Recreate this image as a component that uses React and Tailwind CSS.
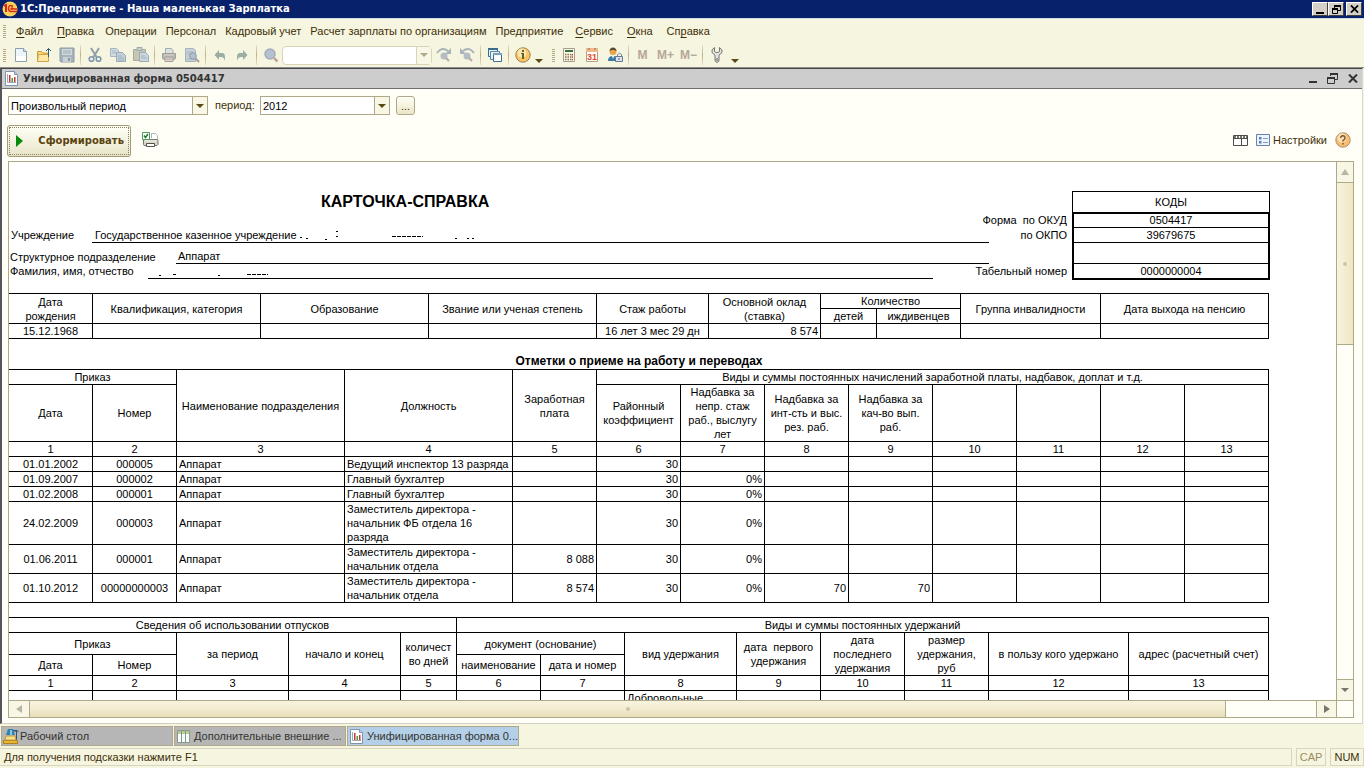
import React, { useState } from 'react';

const MENU = [
  ['', 'Ф', 'айл'],
  ['', 'П', 'равка'],
  ['Операции'],
  ['Персонал'],
  ['Кадровый учет'],
  ['Расчет зарплаты по организациям'],
  ['Предприятие'],
  ['', 'С', 'ервис'],
  ['', 'О', 'кна'],
  ['Сп', 'р', 'авка'],
];

const ORDERS = [
  ['01.01.2002', '000005', 'Аппарат', 'Ведущий инспектор 13 разряда', '', '30', '', '', ''],
  ['01.09.2007', '000002', 'Аппарат', 'Главный бухгалтер', '', '30', '0%', '', ''],
  ['01.02.2008', '000001', 'Аппарат', 'Главный бухгалтер', '', '30', '0%', '', ''],
  ['24.02.2009', '000003', 'Аппарат', 'Заместитель директора -\nначальник ФБ отдела 16\nразряда', '', '30', '0%', '', ''],
  ['01.06.2011', '000001', 'Аппарат', 'Заместитель директора -\nначальник отдела', '8 088', '30', '0%', '', ''],
  ['01.10.2012', '00000000003', 'Аппарат', 'Заместитель директора -\nначальник отдела', '8 574', '30', '0%', '70', '70'],
];

const Icon = ({ children, w = 16, h = 16 }) => (
  <svg width={w} height={h} viewBox={`0 0 ${w} ${h}`} fill="none" className="shrink-0" aria-hidden="true">
    {children}
  </svg>
);

const NewIcon = () => (
  <Icon>
    <path d="M2.5 1.5h8l3 3v10h-11z" fill="#fff" stroke="#8ba0ae" />
    <path d="M3 2h7v3h3v4H3z" fill="#eef5fa" />
    <path d="M10.5 1.5v3h3" fill="#cfdde6" stroke="#8ba0ae" />
  </Icon>
);

const OpenIcon = () => (
  <Icon>
    <path d="M1.5 14.5v-10h4l1 1.500h5v8.500z" fill="#fbd877" stroke="#c99a3c" />
    <path d="M1.500 14.500l1-7h10v7z" fill="#fde9a3" stroke="#d0a548" />
    <path d="M12.500 10V1.500M10 4l2.500-2.500L15 4" stroke="#2f5f78" />
  </Icon>
);

const SaveIcon = () => (
  <Icon>
    <path d="M1 1h14v14H2l-1-1z" fill="#a3b2bd" stroke="#8c9ca8" />
    <path d="M3 2h10v6H3z" fill="#d3dadd" />
    <path d="M4 4h8M4 6h8" stroke="#9eabb4" />
    <path d="M4 10h8v5H4z" fill="#c8d0d4" />
    <path d="M9 11h2v3H9z" fill="#8797a3" />
  </Icon>
);

const CutIcon = () => (
  <Icon>
    <path d="M4 1l5.500 9M12 1L6.500 10" stroke="#8fa0aa" strokeWidth="2" />
    <circle cx="4.500" cy="12" r="2.300" stroke="#7e97ad" strokeWidth="1.600" />
    <circle cx="11.500" cy="12" r="2.300" stroke="#7e97ad" strokeWidth="1.600" />
  </Icon>
);

const CopyIcon = () => (
  <Icon>
    <path d="M.5 1.500h6l2 2v6h-8z" fill="#d0dbe1" stroke="#a6b7c2" />
    <path d="M2 4h4M2 6h4" stroke="#a6b7c2" />
    <path d="M6.500 5.500h6l3 3v6h-9z" fill="#c4d1da" stroke="#97abba" />
    <path d="M8 9h4M8 11h6M8 13h6" stroke="#a0b3c0" />
  </Icon>
);

const PasteIcon = () => (
  <Icon>
    <path d="M.5 2.500h12v11H.5z" fill="#c7c6b2" stroke="#abab9d" />
    <path d="M4 .5h5v3H4z" fill="#c5ccce" stroke="#9da9ad" />
    <path d="M6.500 5.500h6l3 3v6h-9z" fill="#cbd6dd" stroke="#99acba" />
    <path d="M8 9h4M8 11h6" stroke="#a0b3c0" />
  </Icon>
);

const PrintIcon = () => (
  <Icon>
    <path d="M4.500 6V1.500h6l1.500 2V6" fill="#dce2e4" stroke="#a5adaf" />
    <path d="M1.500 6.500h13v5l-1 1h-11l-1-1z" fill="#b9b9b3" stroke="#a0a09c" />
    <path d="M3 8h10" stroke="#d4d4cc" />
    <path d="M4 10h8v4.500H4z" fill="#d8d3cb" stroke="#a8a29e" />
    <path d="M5 12h6" stroke="#c7a9a0" />
  </Icon>
);

const PreviewIcon = () => (
  <Icon>
    <path d="M1.500 1.500h8l2 2v11h-10z" fill="#c6d0d6" stroke="#a5b3bc" />
    <path d="M3 5h6M3 7h4M3 12h6" stroke="#a5b5be" />
    <circle cx="9" cy="9" r="3.300" fill="#b1bfd0" stroke="#8c9cac" />
    <path d="M11.500 11.500L15 15" stroke="#b09a96" strokeWidth="2" />
  </Icon>
);

const UndoIcon = () => (
  <Icon>
    <path d="M7 3v3h3q3 0 3 4v4q-1-4-4-4H7v3L2.500 8z" fill="#9caea4" />
  </Icon>
);

const RedoIcon = () => (
  <Icon>
    <path d="M8 3v3H5q-3 0-3 4v4q1-4 4-4h2v3l4.500-5z" fill="#9caea4" />
  </Icon>
);

const SearchIcon = () => (
  <Icon>
    <path d="M11 11l3.500 3.500" stroke="#c3a39c" strokeWidth="2.500" />
    <circle cx="7" cy="7" r="5" fill="#b4c2d0" stroke="#a3adba" strokeWidth="1.500" />
  </Icon>
);

const FindNextIcon = ({ back }) => (
  <Icon>
    {back ? (
      <path d="M15 6Q10-1 4 4" stroke="#a7b5b8" strokeWidth="2" />
    ) : (
      <path d="M1 6Q6-1 12 4" stroke="#a7b5b8" strokeWidth="2" />
    )}
    <path d={back ? 'M1 1v6h6z' : 'M15 1v6H9z'} fill="#a7b5b8" />
    <circle cx="8" cy="9" r="3.500" fill="#b6bcc4" />
    <path d="M10 11l3 3" stroke="#b9a8a6" strokeWidth="2" />
  </Icon>
);

const WindowsIcon = () => (
  <Icon>
    <path d="M1.500 1.500h9v8h-9z" fill="#e6f0f5" stroke="#3c6c8c" />
    <path d="M1 2h10" stroke="#3c6c8c" strokeWidth="2" />
    <path d="M3.500 4.500h9v8h-9z" fill="#e6f0f5" stroke="#5787a3" />
    <path d="M6.500 7h8v7.500h-8z" fill="#fff" stroke="#3c6c8c" />
    <path d="M6 7h9" stroke="#77a4bc" strokeWidth="2" />
  </Icon>
);

const InfoIcon = () => (
  <Icon>
    <circle cx="8" cy="8" r="7.200" fill="#fbc566" stroke="#99824f" />
    <circle cx="7" cy="6" r="4.500" fill="#ffe6ae" />
    <path d="M7 3h2v2H7zM6 6h3v6H7V7H6z" fill="#526b2c" />
  </Icon>
);

const CalcIcon = () => (
  <Icon>
    <path d="M2.500 1.500h11v13h-11z" fill="#fdf8e3" stroke="#a39f90" />
    <path d="M4 3h8v2H4z" fill="#35703b" />
    <path d="M4 7.500h6M4 10h6M4 12.500h6" stroke="#7d7358" strokeWidth="1.500" strokeDasharray="1.500 1" />
    <path d="M10.500 7h1.500v1.500h-1.500zM10.500 9.300h1.500v1.500h-1.500zM10.500 11.700h1.500v1.500h-1.500z" fill="#c64a32" />
  </Icon>
);

const CalendarIcon = () => (
  <Icon>
    <path d="M2.500 1.500h11v13h-11z" fill="#fff" stroke="#b4a18a" />
    <path d="M2 1h12v4H2z" fill="#f0b98c" />
    <path d="M5 1v2M11 1v2" stroke="#8c6a4c" />
    <text x="8" y="13" textAnchor="middle" fontSize="9" fontFamily="Liberation Sans, sans-serif" fontWeight="700" fill="#e14a22">31</text>
  </Icon>
);

const UserIcon = () => (
  <Icon>
    <circle cx="6" cy="4.500" r="3.500" fill="#e8a54b" />
    <path d="M2.500 4Q3 .5 6 .5T9.500 4Q6 2 2.500 4z" fill="#5b4a2e" />
    <path d="M1 14q0-5 5-5t5 5z" fill="#3a78a8" />
    <path d="M5 9h2l-1 3z" fill="#fff" />
    <path d="M10.500 9V7.500q2-2.500 4 0V9" stroke="#76869a" />
    <path d="M8.500 9.500h7v5h-7z" fill="#dde6f0" stroke="#66788f" />
    <path d="M12 11v2" stroke="#4a5a70" />
  </Icon>
);

const WrenchIcon = () => (
  <Icon>
    <path d="M5.500.5v4l1.500 1h2l1.500-1v-4q3.500 2 2.500 5L10 8v4q.5 3-2 3.500-2.500-.5-2-3.500V8L3 5.500q-1-3 2.500-5z" fill="#e4e4e0" stroke="#77776f" />
    <circle cx="8" cy="12.500" r="1" fill="#fff" stroke="#77776f" />
  </Icon>
);

const ReportIcon = () => (
  <Icon w={13} h={15}>
    <path d="M.5.5h9l3 3v11H.5z" fill="#fff" stroke="#7e93ad" />
    <path d="M9.500.5v3h3" fill="#c7d5e6" stroke="#7e93ad" />
    <path d="M2.500 3v8.500H11" stroke="#9ca8b5" />
    <path d="M4 4h1.500v7H4z" fill="#c03a32" />
    <path d="M6.500 7H8v4H6.500z" fill="#4d9a4a" />
    <path d="M9 6h1.500v5H9z" fill="#c03a32" />
  </Icon>
);

const PrinterCheckIcon = () => (
  <Icon w={17} h={16}>
    <path d="M9.500 6V1.500h4l2 2V7" fill="#fff" stroke="#aeb4b8" />
    <path d="M1.500 7.500h14l.5 1v4l-1 1H2l-.5-1z" fill="#d8d6cc" stroke="#77756c" />
    <path d="M3 9h11" stroke="#f4f3ec" />
    <path d="M4.500 11.500h8v3h-8z" fill="#fff" stroke="#55534b" />
    <path d="M.5.5h7v7h-7z" fill="#fff" stroke="#4f9a5e" />
    <path d="M2 3.500l1.500 2L6 2" stroke="#1d7a2d" strokeWidth="1.500" />
  </Icon>
);

const LogoIcon = () => (
  <Icon>
    <circle cx="8" cy="8" r="7.500" fill="#f9d25c" />
    <path d="M2 5l2-1v7" stroke="#d8281c" strokeWidth="2" />
    <path d="M11 5.500Q7 3 6.500 7t4.500 3.500h4.500M11 7.500Q9 6.500 9 8h6" stroke="#d8281c" strokeWidth="1.500" />
  </Icon>
);

const DeskIcon = () => (
  <Icon>
    <path d="M.5 12.500h14v3H.5z" fill="#e8b62e" stroke="#ad7f1a" />
    <path d="M2 12l1-4h9l1 4z" fill="#f9e08a" stroke="#c29a3c" />
    <path d="M5 1h5l2 6H3z" fill="#2d83b0" />
    <path d="M7 2h2v5H7z" fill="#8cc7df" />
    <path d="M10 2.500h3.500v9M11.500 4l2-2 2 2" stroke="#2a5572" />
  </Icon>
);

const ColumnsIcon = () => (
  <Icon w={13} h={13}>
    <path d="M.5.500h12v12H.5z" fill="#fbfdf8" stroke="#8a9b8e" />
    <path d="M1 1h11v3H1z" fill="#bccc8a" />
    <path d="M4.500 1v11M8.500 1v11" stroke="#7d94a0" />
  </Icon>
);

const GridIcon = () => (
  <Icon w={15} h={11}>
    <path d="M.5.500h14v10H.5z" fill="#fff" stroke="#4d4d48" />
    <path d="M1 2h13" stroke="#77776f" strokeWidth="2" strokeDasharray="2 1" />
    <path d="M1 3.500h13M8.500 4v6" stroke="#4d4d48" />
  </Icon>
);

const SettingsIcon = () => (
  <Icon w={14} h={12}>
    <path d="M.5.500h13v11H.5z" fill="#eef4fd" stroke="#6880b4" />
    <path d="M3 3h2.500v2.500H3zM3 7h2.500v2.500H3z" fill="#5d7bb8" />
    <path d="M7 4.500h5M7 8.500h5" stroke="#8a9cc4" />
  </Icon>
);

const HelpIcon = () => (
  <Icon>
    <circle cx="8" cy="8" r="7.200" fill="#f8bd70" stroke="#ac8f6c" />
    <circle cx="7" cy="6" r="4.500" fill="#fee2b5" />
    <path d="M5.500 6Q6 3.500 8 3.700t2 2.300Q10 7.500 8 8.500v1M8 11v1.500" stroke="#7d5b37" strokeWidth="1.500" />
  </Icon>
);

const Triangle = ({ dir = 'down', color = '#5c4a13', size = 8 }) => {
  const d = {
    down: 'M0 2h8L4 6z',
    up: 'M0 7h8L4 1z',
    left: 'M7 0v8L1 4z',
    right: 'M1 0v8l6-4z',
  }[dir];
  return (
    <svg width={size} height={size} viewBox="0 0 8 8" aria-hidden="true">
      <path d={d} fill={color} />
    </svg>
  );
};

const Separator = () => <span className="mx-0.5 h-5 w-px shrink-0 bg-gradient-to-b from-[#e8dfc4] via-[#bfb08c] to-[#e8dfc4]" />;

const Grip = () => (
  <span className="flex w-[3px] shrink-0 flex-col gap-px">
    {[0, 1, 2, 3, 4, 5, 6].map((i) => (
      <span key={i} className="h-px bg-[#b5aa86]" />
    ))}
  </span>
);

const Tool = ({ title, children }) => (
  <button type="button" title={title} className="flex h-[22px] w-[23px] shrink-0 items-center justify-center">
    {children}
  </button>
);

const Combo = ({ id, label, value, options, onChange, width }) => (
  <div className={`relative flex h-[19px] border border-[#b0a989] bg-white ${width}`}>
    <select
      id={id}
      aria-label={label}
      value={value}
      onChange={(e) => onChange(e.target.value)}
      className="w-full appearance-none bg-transparent pl-0.5 pr-4 leading-4 text-black outline-none"
    >
      {options.map((o) => (
        <option key={o}>{o}</option>
      ))}
    </select>
    <span className="pointer-events-none absolute inset-y-0 right-0 flex w-[15px] items-center justify-center border-l border-[#b0a989] bg-[#f8f6e4]">
      <Triangle />
    </span>
  </div>
);

const RestoreGlyph = () => (
  <Icon w={11} h={11}>
    <path d="M3.500 3V.5h7v6H8" stroke="currentColor" />
    <path d="M3 1h8M0 5h8" stroke="currentColor" strokeWidth="2" />
    <path d="M.5 4.500h7v6h-7z" stroke="currentColor" />
  </Icon>
);

const SmallRestoreGlyph = () => (
  <Icon w={9} h={9}>
    <path d="M2.500 3V.5h6v5H6" stroke="currentColor" />
    <path d="M2 1h7M0 4h6" stroke="currentColor" strokeWidth="2" />
    <path d="M.5 3.500h5v5h-5z" stroke="currentColor" />
  </Icon>
);

const CloseGlyph = ({ w = 10 }) => (
  <svg width={w} height={w - 1} viewBox="0 0 10 9" fill="none" aria-hidden="true">
    <path d="M1 .5l8 8M9 .5l-8 8" stroke="currentColor" strokeWidth="2" />
  </svg>
);

const MinGlyph = () => (
  <Icon w={8} h={9}>
    <path d="M0 8h8" stroke="currentColor" strokeWidth="2" />
  </Icon>
);

const winButton =
  'flex h-[14px] w-4 items-center justify-center border border-t-white border-l-white border-r-[#404040] border-b-[#404040] bg-[#d4d0c8] text-black';

const TitleBar = () => (
  <header className="flex h-[18px] shrink-0 items-center bg-[#08216b] pl-0.5 pr-0.5 text-white">
    <LogoIcon />
    <h1 className="ml-0.5 grow font-['DejaVu_Sans',sans-serif] text-[10px] font-bold">1С:Предприятие - Наша маленькая Зарплатка</h1>
    <button type="button" aria-label="Свернуть" className={winButton}><MinGlyph /></button>
    <button type="button" aria-label="Восстановить" className={winButton}><SmallRestoreGlyph /></button>
    <button type="button" aria-label="Закрыть" className={`ml-0.5 ${winButton}`}><CloseGlyph w={9} /></button>
  </header>
);

const MenuBar = () => (
  <nav className="flex h-[25px] shrink-0 items-center border-t border-[#d5dbe6] pl-[3px]">
    <Grip />
    <ul className="ml-[3px] flex">
      {MENU.map(([before, key, after]) => (
        <li key={before + key}>
          <button type="button" className={key ? 'px-[7px]' : 'pl-1 pr-[5px]'}>
            {before}
            {key && <span className="underline underline-offset-2">{key}</span>}
            {after}
          </button>
        </li>
      ))}
    </ul>
  </nav>
);

const Toolbar = () => (
  <div className="flex h-[25px] shrink-0 items-center border-b border-[#8e8e88] pl-[3px]">
    <Grip />
    <span className="w-[3px]" />
    <Tool title="Новый"><NewIcon /></Tool>
    <Tool title="Открыть"><OpenIcon /></Tool>
    <Tool title="Сохранить"><SaveIcon /></Tool>
    <Separator />
    <Tool title="Вырезать"><CutIcon /></Tool>
    <Tool title="Копировать"><CopyIcon /></Tool>
    <Tool title="Вставить"><PasteIcon /></Tool>
    <Separator />
    <Tool title="Печать"><PrintIcon /></Tool>
    <Tool title="Предварительный просмотр"><PreviewIcon /></Tool>
    <Separator />
    <Tool title="Отменить"><UndoIcon /></Tool>
    <Tool title="Вернуть"><RedoIcon /></Tool>
    <Separator />
    <Tool title="Найти"><SearchIcon /></Tool>
    <div className="flex h-[19px] w-[150px] rounded-sm border border-[#d9d3b8] bg-white">
      <input type="text" aria-label="Поиск" className="w-0 grow bg-transparent px-0.5 outline-none" />
      <button type="button" aria-label="История поиска" className="flex w-[15px] items-center justify-center border-l border-[#d9d3b8] bg-[#f8f7e6]">
        <Triangle color="#b0a98a" />
      </button>
    </div>
    <Tool title="Найти далее"><FindNextIcon /></Tool>
    <Tool title="Найти предыдущее"><FindNextIcon back /></Tool>
    <Separator />
    <Tool title="Окна"><WindowsIcon /></Tool>
    <Separator />
    <Tool title="Справка"><InfoIcon /></Tool>
    <button type="button" aria-label="Еще" className="flex h-5 w-[10px] items-end justify-center"><Triangle /></button>
    <span className="ml-2 mr-0.5"><Grip /></span>
    <Tool title="Калькулятор"><CalcIcon /></Tool>
    <Tool title="Календарь"><CalendarIcon /></Tool>
    <Tool title="Пользователи"><UserIcon /></Tool>
    <Separator />
    {['M', 'M+', 'M−'].map((m) => (
      <Tool key={m} title={m}>
        <span className="text-xs font-bold text-[#b5a79a]">{m}</span>
      </Tool>
    ))}
    <Separator />
    <Tool title="Сервис"><WrenchIcon /></Tool>
    <span className="w-0.5" />
    <button type="button" aria-label="Еще" className="flex h-5 w-[10px] items-end justify-center"><Triangle /></button>
  </div>
);

const Cell = ({ as: Tag = 'td', className = '', children, ...rest }) => (
  <Tag className={`whitespace-pre-line border-b border-r border-black px-0.5 font-normal ${className}`} {...rest}>
    {children}
  </Tag>
);

const H = (props) => <Cell as="th" {...props} />;

const NumberRow = () => (
  <tr className="h-[15px]">
    {Array.from({ length: 13 }, (_, i) => (
      <H key={i}>{i + 1}</H>
    ))}
  </tr>
);

const Cols = ({ widths }) => (
  <colgroup>
    {widths.map((w, i) => (
      <col key={i} style={{ width: w }} />
    ))}
  </colgroup>
);

const tableClass = 'w-full table-fixed border-separate border-spacing-0 border-t border-black';

const CardHeader = () => (
  <section className="flex pb-[13px]">
    <div className="w-[980px]">
      <h2 className="mb-4 ml-[312px] mt-[30px] text-base font-bold leading-5">КАРТОЧКА-СПРАВКА</h2>
      <div className="flex h-[15px]">
        <span className="w-[83px] pl-0.5">Учреждение</span>
        <span className="flex grow border-b border-black pl-[3px]">
          Государственное казенное учреждение
          {/* остатки затертого наименования */}
          <svg width="190" height="14" viewBox="0 0 190 14" aria-hidden="true">
            <path d="M3 9.500h2M9 10.500h2M28 11.500h2M39 3.500h2M39 8.500h2M158 10.500h2M170 10.500h2M175 10.500h2" stroke="#000" />
            <path d="M95 8.500h31" stroke="#000" strokeDasharray="4 1" />
          </svg>
        </span>
      </div>
      <div className="flex h-[21px] items-end">
        <span className="w-[167px] pl-px">Структурное подразделение</span>
        <span className="grow border-b border-black pl-0.5">Аппарат</span>
      </div>
      <div className="flex h-[15px] w-[924px]">
        <span className="w-[139px] pl-px">Фамилия, имя, отчество</span>
        <span className="grow border-b border-black">
          <svg width="130" height="14" viewBox="0 0 130 14" aria-hidden="true">
            <path d="M11 11.500h2M25 10.500h3M70 11.500h2" stroke="#000" />
            <path d="M99 10.500h21" stroke="#000" strokeDasharray="4 1" />
          </svg>
        </span>
      </div>
    </div>
    <div className="flex w-[83px] flex-col items-end whitespace-pre pr-[5px] pt-[51px]">
      <span className="h-[15px]">Форма  по ОКУД</span>
      <span className="h-9">по ОКПО</span>
      <span className="h-[15px]">Табельный номер</span>
    </div>
    <table className="mt-[29px] w-[198px] border-separate border-spacing-0 text-center leading-[13px]">
      <thead>
        <tr className="h-[21px]">
          <th className="border border-b-0 border-black font-normal">КОДЫ</th>
        </tr>
      </thead>
      <tbody>
        <tr className="h-4"><td className="border-x-2 border-b border-t-2 border-black">0504417</td></tr>
        <tr className="h-[15px]"><td className="border-x-2 border-b border-black">39679675</td></tr>
        <tr className="h-[21px]"><td className="border-x-2 border-b border-black" /></tr>
        <tr className="h-4"><td className="border-x-2 border-b-2 border-black">0000000004</td></tr>
      </tbody>
    </table>
  </section>
);

const PersonTable = () => (
  <table className={tableClass}>
    <Cols widths={[84, 168, 168, 168, 112, 112, 56, 84, 140, 168]} />
    <thead>
      <tr className="h-[15px]">
        <H rowSpan={2}>{'Дата\nрождения'}</H>
        <H rowSpan={2}>Квалификация, категория</H>
        <H rowSpan={2}>Образование</H>
        <H rowSpan={2}>Звание или ученая степень</H>
        <H rowSpan={2}>Стаж работы</H>
        <H rowSpan={2}>{'Основной оклад\n(ставка)'}</H>
        <H colSpan={2}>Количество</H>
        <H rowSpan={2}>Группа инвалидности</H>
        <H rowSpan={2}>Дата выхода на пенсию</H>
      </tr>
      <tr className="h-[15px]">
        <H>детей</H>
        <H>иждивенцев</H>
      </tr>
    </thead>
    <tbody>
      <tr className="h-[15px]">
        <Cell className="text-center">15.12.1968</Cell>
        <Cell />
        <Cell />
        <Cell />
        <Cell className="text-center">16 лет 3 мес 29 дн</Cell>
        <Cell className="text-right">8 574</Cell>
        <Cell />
        <Cell />
        <Cell />
        <Cell />
      </tr>
    </tbody>
  </table>
);

const OrdersTable = () => (
  <table className={tableClass}>
    <Cols widths={[84, 84, 168, 168, 84, 84, 84, 84, 84, 84, 84, 84, 84]} />
    <thead>
      <tr className="h-[15px]">
        <H colSpan={2}>Приказ</H>
        <H rowSpan={2}>Наименование подразделения</H>
        <H rowSpan={2}>Должность</H>
        <H rowSpan={2}>{'Заработная\nплата'}</H>
        <H colSpan={8}>Виды и суммы постоянных начислений заработной платы, надбавок, доплат и т.д.</H>
      </tr>
      <tr className="h-[57px]">
        <H>Дата</H>
        <H>Номер</H>
        <H>{'Районный\nкоэффициент'}</H>
        <H>{'Надбавка за\nнепр. стаж\nраб., выслугу\nлет'}</H>
        <H>{'Надбавка за\nинт-сть и выс.\nрез. раб.'}</H>
        <H>{'Надбавка за\nкач-во вып.\nраб.'}</H>
        <H />
        <H />
        <H />
        <H />
      </tr>
      <NumberRow />
    </thead>
    <tbody>
      {ORDERS.map((row) => (
        <tr key={row[0]} className="h-[15px]">
          {row.map((v, i) => (
            <Cell key={i} className={i < 2 ? 'text-center' : i < 4 ? 'text-left' : 'text-right'}>{v}</Cell>
          ))}
          <Cell />
          <Cell />
          <Cell />
          <Cell />
        </tr>
      ))}
    </tbody>
  </table>
);

const DeductionsTable = () => (
  <table className={tableClass}>
    <Cols widths={[84, 84, 112, 112, 56, 84, 84, 112, 84, 84, 84, 140, 140]} />
    <thead>
      <tr className="h-[15px]">
        <H colSpan={5}>Сведения об использовании отпусков</H>
        <H colSpan={8}>Виды и суммы постоянных удержаний</H>
      </tr>
      <tr className="h-[22px]">
        <H colSpan={2}>Приказ</H>
        <H rowSpan={2}>за период</H>
        <H rowSpan={2}>начало и конец</H>
        <H rowSpan={2}>{'количест\nво дней'}</H>
        <H colSpan={2}>документ (основание)</H>
        <H rowSpan={2}>вид удержания</H>
        <H rowSpan={2}>{'дата \u00a0первого\nудержания'}</H>
        <H rowSpan={2}>{'дата\nпоследнего\nудержания'}</H>
        <H rowSpan={2}>{'размер\nудержания,\nруб'}</H>
        <H rowSpan={2}>в пользу кого удержано</H>
        <H rowSpan={2}>адрес (расчетный счет)</H>
      </tr>
      <tr className="h-[21px]">
        <H>Дата</H>
        <H>Номер</H>
        <H>наименование</H>
        <H>дата и номер</H>
      </tr>
      <NumberRow />
    </thead>
    <tbody>
      <tr className="h-[29px]">
        {Array.from({ length: 13 }, (_, i) => (
          <Cell key={i} className="align-top">{i === 7 ? 'Добровольные' : ''}</Cell>
        ))}
      </tr>
    </tbody>
  </table>
);

const Sheet = () => (
  <div className="mb-[5px] ml-1.5 mr-2 grid min-h-0 grow grid-cols-[minmax(0,1fr)_17px] grid-rows-[minmax(0,1fr)_17px] border border-[#b0a989] bg-white">
    <div className="overflow-hidden text-[11px] leading-[14px] text-black">
      <div className="w-[1261px]">
        <CardHeader />
        <div className="w-[1260px]">
          <PersonTable />
          <h3 className="pb-px pt-4 text-center text-xs font-bold leading-[13px]">Отметки о приеме на работу и переводах</h3>
          <OrdersTable />
          <div className="h-[14px]" />
          <DeductionsTable />
        </div>
      </div>
    </div>
    <div className="flex flex-col border-l border-[#b0a989] bg-[#fffff7]">
      <button type="button" aria-label="Вверх" className="flex h-5 items-center justify-center bg-[#f8f6e4]">
        <Triangle dir="up" color="#b9b5a4" />
      </button>
      <div className="flex h-[163px] items-center justify-center border-y border-[#b0a989] bg-gradient-to-r from-[#f7f4de] to-[#efe6c4]">
        <span className="size-1 rounded-full bg-[#cfc6a5]" />
      </div>
      <div className="grow" />
      <button type="button" aria-label="Вниз" className="flex h-[21px] items-center justify-center border-t border-[#b0a989] bg-[#f8f6e4]">
        <Triangle dir="down" color="#77756c" />
      </button>
    </div>
    <div className="flex border-t border-[#b0a989] bg-[#fffff7]">
      <button type="button" aria-label="Влево" className="flex w-5 items-center justify-center bg-[#f8f6e4]">
        <Triangle dir="left" color="#b9b5a4" />
      </button>
      <div className="flex w-[1197px] items-center justify-center border-x border-[#b0a989] bg-gradient-to-b from-[#f7f4de] via-[#f3ecd0] to-[#e6ddb8]">
        <span className="size-1 rounded-full bg-[#cfc6a5]" />
      </div>
      <div className="grow" />
      <button type="button" aria-label="Вправо" className="flex w-5 items-center justify-center border-l border-[#b0a989] bg-[#f8f6e4]">
        <Triangle dir="right" color="#77756c" />
      </button>
    </div>
    <div className="border-l border-t border-[#b0a989] bg-[#fffff7]" />
  </div>
);

const FormWindow = () => {
  const [kind, setKind] = useState('Произвольный период');
  const [period, setPeriod] = useState('2012');

  return (
    <main className="mr-px flex min-h-0 grow flex-col border-b border-l-2 border-r border-t border-b-[#cfcfc8] border-l-[#55555a] border-r-[#d8d8d0] border-t-[#44444a] bg-[#fffff7]">
      <div className="flex h-5 shrink-0 items-center border-b border-[#6e6e6e] bg-[#cdcdcd] pl-[3px] pr-1 text-[#333]">
        <ReportIcon />
        <h2 className="ml-[5px] grow font-['DejaVu_Sans',sans-serif] text-[10px] font-bold">Унифицированная форма 0504417</h2>
        <div className="flex items-center gap-2.5">
          <button type="button" aria-label="Свернуть окно"><MinGlyph /></button>
          <button type="button" aria-label="Восстановить окно"><RestoreGlyph /></button>
          <button type="button" aria-label="Закрыть окно"><CloseGlyph /></button>
        </div>
      </div>

      <div className="flex h-9 shrink-0 items-start pl-1.5 pt-[7px] leading-[19px]">
        <Combo
          label="Вид периода"
          value={kind}
          onChange={setKind}
          options={['Произвольный период', 'Год', 'Квартал', 'Месяц']}
          width="w-[200px]"
        />
        <label htmlFor="period" className="ml-[7px] w-[45px]">период:</label>
        <Combo id="period" value={period} onChange={setPeriod} options={['2012', '2011', '2010']} width="w-[130px]" />
        <button type="button" aria-label="Выбрать период" className="ml-1.5 h-[19px] w-[19px] rounded-[3px] border border-[#b0a989] bg-gradient-to-b from-[#fffff7] to-[#ebe6c8] leading-4">
          ...
        </button>
      </div>

      <div className="flex h-9 shrink-0 items-start pl-[5px] pr-[11px]">
        <button type="button" className="flex h-8 w-[124px] items-center rounded-[3px] border border-[#a39c79] bg-gradient-to-b from-[#fffff7] to-[#e9e4c8] p-px">
          <span className="flex h-full w-full items-center justify-between border border-dotted border-[#8a8360] pl-1.5 pr-1">
            <svg width="7" height="12" viewBox="0 0 7 12" aria-hidden="true"><path d="M0 0v12l7-6z" fill="#0a8a0a" /></svg>
            <span className="font-['DejaVu_Sans',sans-serif] text-[10px] font-bold text-[#5a4510]">Сформировать</span>
          </span>
        </button>
        <button type="button" aria-label="Печать" className="ml-[11px] mt-[7px]"><PrinterCheckIcon /></button>
        <span className="grow" />
        <div className="flex h-[30px] items-center">
          <button type="button" aria-label="Таблица"><GridIcon /></button>
          <button type="button" className="ml-2 flex items-center gap-[3px]">
            <SettingsIcon />
            Настройки
          </button>
          <button type="button" aria-label="Справка" className="ml-2"><HelpIcon /></button>
        </div>
      </div>

      <Sheet />
    </main>
  );
};

const TASKS = [
  { title: 'Рабочий стол', icon: <DeskIcon />, tight: true },
  { title: 'Дополнительные внешние ...', icon: <ColumnsIcon /> },
  { title: 'Унифицированная форма 0...', icon: <ReportIcon />, active: true },
];

const App = () => (
  <div className="flex h-screen flex-col overflow-hidden bg-[#f6f5df] font-['Liberation_Sans',sans-serif] text-[11px] leading-4 text-[#3d2f08]">
    <TitleBar />
    <MenuBar />
    <Toolbar />
    <FormWindow />

    <div className="flex h-6 shrink-0 items-center gap-px pl-px">
      {TASKS.map((t) => (
        <button
          key={t.title}
          type="button"
          className={`flex h-5 w-[172px] items-center whitespace-nowrap border border-[#b0a989] text-[#33332e] ${t.active ? 'bg-[#b4cfe8]' : 'bg-[#b6b6b6]'} ${t.tight ? 'gap-px px-px' : 'gap-1 px-0.5'}`}
        >
          {t.icon}
          {t.title}
        </button>
      ))}
    </div>

    <footer className="flex h-5 shrink-0 gap-1 pb-0.5">
      <span className="grow border border-l-0 border-[#d8d6c0] pl-1 leading-4">Для получения подсказки нажмите F1</span>
      <span className="w-[30px] border border-[#d8d6c0] text-center leading-4 text-[#9a8c60]">CAP</span>
      <span className="w-[34px] border border-[#d8d6c0] text-center leading-4">NUM</span>
    </footer>
  </div>
);

export default App;
